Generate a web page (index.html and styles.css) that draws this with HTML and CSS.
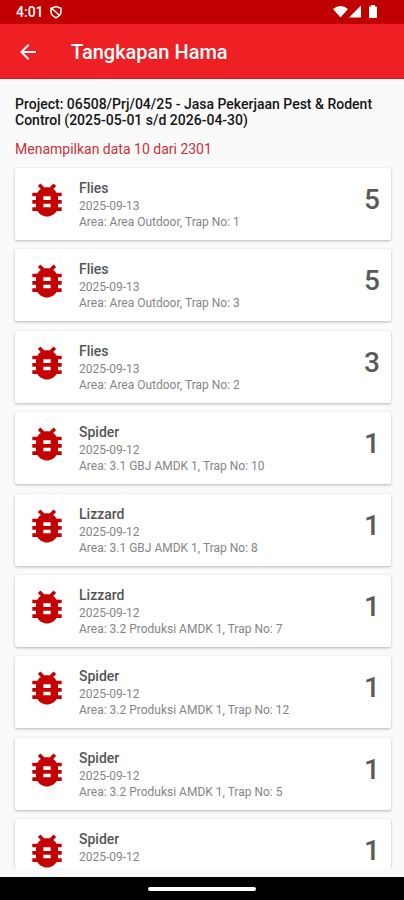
FILE: index.html
```
<!DOCTYPE html>
<html lang="id">
<head>
<meta charset="utf-8">
<meta name="viewport" content="width=device-width, initial-scale=1">
<title>Tangkapan Hama</title>
<link rel="stylesheet" href="styles.css">
</head>
<body>
<svg class="sprite" aria-hidden="true">
  <symbol id="bug" viewBox="0 0 24 24"><path d="M20 8h-2.81c-.45-.78-1.07-1.45-1.82-1.96L17 4.41 15.59 3l-2.17 2.17C12.96 5.06 12.49 5 12 5s-.96.06-1.41.17L8.41 3 7 4.41l1.62 1.63C7.88 6.55 7.26 7.22 6.81 8H4v2h2.09c-.05.33-.09.66-.09 1v1H4v2h2v1c0 .34.04.67.09 1H4v2h2.81c1.04 1.79 2.97 3 5.19 3s4.15-1.21 5.19-3H20v-2h-2.09c.05-.33.09-.66.09-1v-1h2v-2h-2v-1c0-.34-.04-.67-.09-1H20V8zm-6 8h-4v-2h4v2zm0-4h-4v-2h4v2z"/></symbol>
</svg>
<div class="screen">
  <div class="status">
    <span class="clock">4:01</span>
    <svg class="shield" viewBox="0 0 14 14" aria-hidden="true"><path d="M7 1.500 12 3.200v3.400c0 2.900-2 5-5 6.100C4 11.600 2 9.500 2 6.600V3.200zM2.500 3 10.500 10.500"/></svg>
    <svg class="signals" viewBox="0 0 44 14" aria-hidden="true"><path d="M0 4Q7.500-2 15 4L7.500 12.500zM28 0.500V12.500H16zM36 1.500h2V0h4v1.500h1q1 0 1 1V12q0 1-1 1h-6q-1 0-1-1z"/></svg>
  </div>
  <header class="bar">
    <button class="back" aria-label="Kembali"><svg viewBox="0 0 24 24" aria-hidden="true"><path d="M20 11H7.830l5.590-5.590L12 4l-8 8 8 8 1.410-1.410L7.830 13H20z"/></svg></button>
    <h1>Tangkapan Hama</h1>
  </header>
  <main>
    <h2>Project: 06508/Prj/04/25 - Jasa Pekerjaan Pest &amp; Rodent Control (2025-05-01 s/d 2026-04-30)</h2>
    <p class="count">Menampilkan data 10 dari 2301</p>
    <ul class="list">
      <li class="card"><svg class="bug" aria-hidden="true"><use href="#bug"/></svg><div class="info"><h3>Flies</h3><p>2025-09-13</p><p>Area: Area Outdoor, Trap No: 1</p></div><strong>5</strong></li>
      <li class="card"><svg class="bug" aria-hidden="true"><use href="#bug"/></svg><div class="info"><h3>Flies</h3><p>2025-09-13</p><p>Area: Area Outdoor, Trap No: 3</p></div><strong>5</strong></li>
      <li class="card"><svg class="bug" aria-hidden="true"><use href="#bug"/></svg><div class="info"><h3>Flies</h3><p>2025-09-13</p><p>Area: Area Outdoor, Trap No: 2</p></div><strong>3</strong></li>
      <li class="card"><svg class="bug" aria-hidden="true"><use href="#bug"/></svg><div class="info"><h3>Spider</h3><p>2025-09-12</p><p>Area: 3.1 GBJ AMDK 1, Trap No: 10</p></div><strong>1</strong></li>
      <li class="card"><svg class="bug" aria-hidden="true"><use href="#bug"/></svg><div class="info"><h3>Lizzard</h3><p>2025-09-12</p><p>Area: 3.1 GBJ AMDK 1, Trap No: 8</p></div><strong>1</strong></li>
      <li class="card"><svg class="bug" aria-hidden="true"><use href="#bug"/></svg><div class="info"><h3>Lizzard</h3><p>2025-09-12</p><p>Area: 3.2 Produksi AMDK 1, Trap No: 7</p></div><strong>1</strong></li>
      <li class="card"><svg class="bug" aria-hidden="true"><use href="#bug"/></svg><div class="info"><h3>Spider</h3><p>2025-09-12</p><p>Area: 3.2 Produksi AMDK 1, Trap No: 12</p></div><strong>1</strong></li>
      <li class="card"><svg class="bug" aria-hidden="true"><use href="#bug"/></svg><div class="info"><h3>Spider</h3><p>2025-09-12</p><p>Area: 3.2 Produksi AMDK 1, Trap No: 5</p></div><strong>1</strong></li>
      <li class="card partial"><svg class="bug" aria-hidden="true"><use href="#bug"/></svg><div class="info"><h3>Spider</h3><p>2025-09-12</p></div><strong>1</strong></li>
    </ul>
  </main>
  <footer class="nav"><span></span></footer>
</div>
</body>
</html>
```
FILE: styles.css
```
* {
  box-sizing: border-box;
  margin: 0;
}

body {
  background: #fafafa;
  font-family: Roboto, "Liberation Sans", sans-serif;
}

.sprite {
  display: none;
}

.screen {
  display: flex;
  flex-direction: column;
  height: 100vh;
}

.status {
  display: flex;
  flex: none;
  align-items: center;
  gap: 5px;
  height: 24px;
  padding: 0 27px 0 16px;
  background: #c00000;
  color: #fff;
}

.clock {
  font-size: 14px;
  font-weight: 500;
}

.shield {
  width: 14px;
  height: 14px;
  fill: none;
  stroke: #fff;
  stroke-width: 1.5;
}

.signals {
  width: 44px;
  height: 14px;
  margin-left: auto;
  fill: #fff;
}

.bar {
  display: flex;
  flex: none;
  align-items: center;
  gap: 31px;
  height: 55px;
  padding: 2px 16px 0;
  background: #ee2024;
  border-bottom: 1px solid #e01b1f;
  color: #fff;
}

.back {
  display: flex;
  padding: 0;
  border: 0;
  background: none;
}

.back svg {
  width: 24px;
  height: 24px;
  fill: #fff;
}

h1 {
  font-size: 20px;
  font-weight: 500;
}

main {
  display: flex;
  flex: 1;
  flex-direction: column;
  min-height: 0;
  padding: 17px 9px 9px 11px;
}

h2 {
  padding: 0 4px;
  color: #151515;
  font-size: 14px;
  font-weight: 500;
  line-height: 16px;
}

.count {
  padding: 13px 4px 0;
  color: #cc3038;
  font-size: 14px;
  line-height: 16px;
}

.list {
  display: flex;
  flex: 1;
  flex-direction: column;
  justify-content: space-between;
  min-height: 0;
  margin-top: 8px;
  padding: 3px 4px 0;
  overflow: hidden;
  list-style: none;
}

.card {
  display: flex;
  flex: none;
  gap: 10px;
  height: 72px;
  padding: 10px 11px 0 10px;
  border-radius: 2px;
  background: #fff;
  box-shadow: 0 1px 3px rgba(0, 0, 0, 0.28);
}

.partial {
  height: 49px;
}

.bug {
  flex: none;
  width: 44px;
  height: 44px;
  fill: #c40000;
}

.info {
  flex: 1;
  padding-top: 1px;
}

h3 {
  color: #555;
  font-size: 14px;
  font-weight: 500;
  line-height: 19px;
}

.info p {
  color: #858585;
  font-size: 12px;
  line-height: 16px;
}

strong {
  color: #5a5a5a;
  font-size: 28px;
  font-weight: 500;
  line-height: 44px;
}

.nav {
  display: flex;
  flex: none;
  align-items: center;
  justify-content: center;
  height: 23px;
  background: #000;
}

.nav span {
  width: 108px;
  height: 4px;
  border-radius: 2px;
  background: #fff;
}
```
